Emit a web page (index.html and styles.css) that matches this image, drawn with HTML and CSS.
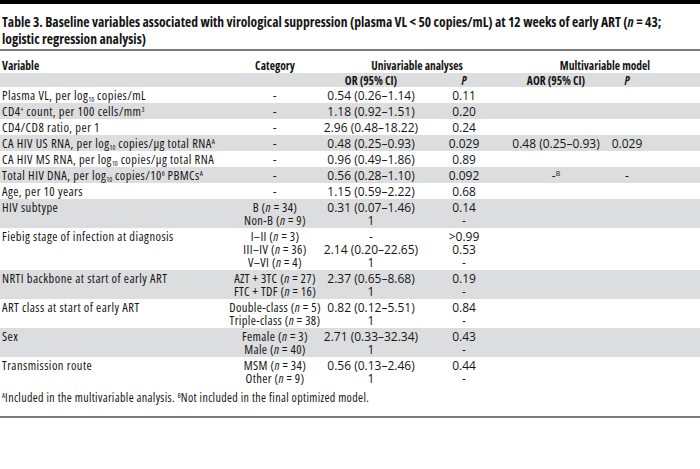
FILE: index.html
```html
<!DOCTYPE html>
<html lang="en">
<head>
<meta charset="utf-8">
<title>Table 3</title>
<link rel="stylesheet" href="styles.css">
</head>
<body>
<div class="topbar"></div>
<h1 class="title">Table 3. Baseline variables associated with virological suppression (plasma VL &lt; 50 copies/mL) at 12 weeks of early ART (<i>n</i> = 43;<br>logistic regression analysis)</h1>
<div class="rule"></div>
<table class="tbl">
  <colgroup>
    <col class="c-var"><col class="c-cat"><col class="c-or"><col class="c-p"><col class="c-aor"><col class="c-p2"><col class="c-fill">
  </colgroup>
  <thead>
    <tr class="h1">
      <th class="left">Variable</th>
      <th>Category</th>
      <th colspan="2" class="span-uni">Univariable analyses</th>
      <th colspan="3" class="span-multi">Multivariable model</th>
    </tr>
    <tr class="h2 shade">
      <th></th><th></th>
      <th>OR (95% CI)</th>
      <th><i>P</i></th>
      <th>AOR (95% CI)</th>
      <th><i>P</i></th>
      <th></th>
    </tr>
  </thead>
  <tbody>
    <tr><td class="var">Plasma VL, per log<sub>10</sub> copies/mL</td><td class="cat">-</td><td>0.54 (0.26–1.14)</td><td>0.11</td><td></td><td></td><td></td></tr>
    <tr class="shade"><td class="var">CD4<sup>+</sup> count, per 100 cells/mm<sup>3</sup></td><td class="cat">-</td><td>1.18 (0.92–1.51)</td><td>0.20</td><td></td><td></td><td></td></tr>
    <tr><td class="var">CD4/CD8 ratio, per 1</td><td class="cat">-</td><td>2.96 (0.48–18.22)</td><td>0.24</td><td></td><td></td><td></td></tr>
    <tr class="shade"><td class="var">CA HIV US RNA, per log<sub>10</sub> copies/μg total RNA<sup>A</sup></td><td class="cat">-</td><td>0.48 (0.25–0.93)</td><td>0.029</td><td>0.48 (0.25–0.93)</td><td>0.029</td><td></td></tr>
    <tr><td class="var">CA HIV MS RNA, per log<sub>10</sub> copies/μg total RNA</td><td class="cat">-</td><td>0.96 (0.49–1.86)</td><td>0.89</td><td></td><td></td><td></td></tr>
    <tr class="shade"><td class="var">Total HIV DNA, per log<sub>10</sub> copies/10<sup>6</sup> PBMCs<sup>A</sup></td><td class="cat">-</td><td>0.56 (0.28–1.10)</td><td>0.092</td><td>-<sup>B</sup></td><td>-</td><td></td></tr>
    <tr><td class="var">Age, per 10 years</td><td class="cat">-</td><td>1.15 (0.59–2.22)</td><td>0.68</td><td></td><td></td><td></td></tr>
    <tr class="shade"><td class="var">HIV subtype</td><td class="cat">B (<i>n</i> = 34)<br>Non-B (<i>n</i> = 9)</td><td>0.31 (0.07–1.46)<br>1</td><td>0.14<br>-</td><td></td><td></td><td></td></tr>
    <tr><td class="var">Fiebig stage of infection at diagnosis</td><td class="cat">I–II (<i>n</i> = 3)<br>III–IV (<i>n</i> = 36)<br>V–VI (<i>n</i> = 4)</td><td>-<br>2.14 (0.20–22.65)<br>1</td><td>&gt;0.99<br>0.53<br>-</td><td></td><td></td><td></td></tr>
    <tr class="shade"><td class="var">NRTI backbone at start of early ART</td><td class="cat">AZT + 3TC (<i>n</i> = 27)<br>FTC + TDF (<i>n</i> = 16)</td><td>2.37 (0.65–8.68)<br>1</td><td>0.19<br>-</td><td></td><td></td><td></td></tr>
    <tr><td class="var">ART class at start of early ART</td><td class="cat">Double-class (<i>n</i> = 5)<br>Triple-class (<i>n</i> = 38)</td><td>0.82 (0.12–5.51)<br>1</td><td>0.84<br>-</td><td></td><td></td><td></td></tr>
    <tr class="shade"><td class="var">Sex</td><td class="cat">Female (<i>n</i> = 3)<br>Male (<i>n</i> = 40)</td><td>2.71 (0.33–32.34)<br>1</td><td>0.43<br>-</td><td></td><td></td><td></td></tr>
    <tr><td class="var">Transmission route</td><td class="cat">MSM (<i>n</i> = 34)<br>Other (<i>n</i> = 9)</td><td>0.56 (0.13–2.46)<br>1</td><td>0.44<br>-</td><td></td><td></td><td></td></tr>
  </tbody>
</table>
<p class="foot"><sup>A</sup>Included in the multivariable analysis. <sup>B</sup>Not included in the final optimized model.</p>
<div class="rule bottom"></div>
</body>
</html>
```
FILE: styles.css
```css
html, body {
  margin: 0;
  padding: 0;
  background: #ffffff;
}
body {
  width: 700px;
  color: #151515;
  font-family: "Open Sans", "DejaVu Sans Condensed", sans-serif;
  font-stretch: 90%;
  font-size: 12px;
}
.topbar {
  height: 4px;
  background: #000;
}
.title {
  margin: 0;
  padding: 9px 2px 0 2px;
  font-size: 13.6px;
  font-stretch: 75%;
  line-height: 17px;
  font-weight: bold;
  height: 36px;
  white-space: nowrap;
}
.title i { font-style: italic; }
.rule {
  height: 2px;
  background: #7a7a7a;
}
.tbl {
  width: 700px;
  border-collapse: collapse;
  table-layout: fixed;
}
.c-var { width: 228px; }
.c-cat { width: 94px; }
.c-or { width: 98px; }
.c-p { width: 88px; }
.c-aor { width: 96px; }
.c-p2 { width: 46px; }
.c-fill { width: 50px; }
.tbl th, .tbl td {
  padding: 2px 0 1px 0;
  line-height: 13px;
  text-align: center;
  vertical-align: top;
  white-space: nowrap;
}
.tbl .left { text-align: left; padding-left: 2px; }
.tbl .var {
  text-align: left;
  padding-left: 2px;
  font-stretch: 75%;
  font-size: 12.5px;
  letter-spacing: 0.45px;
}
.tbl .cat {
  font-stretch: 75%;
  font-size: 12.5px;
  letter-spacing: 0.35px;
}
.tbl th {
  font-weight: bold;
  font-stretch: 75%;
  font-size: 11.5px;
}
.h1 th {
  padding-top: 8px;
  padding-bottom: 1px;
}
.h2 th {
  padding-top: 1px;
  padding-bottom: 0;
}
.span-uni { padding-left: 4px !important; }
.span-multi { padding-left: 2px !important; }
.shade { background: #dcdddf; }
sub, sup {
  font-size: 7px;
  line-height: 0;
  letter-spacing: 0;
  position: relative;
  vertical-align: baseline;
}
sub { top: 2px; }
sup { top: -4px; }
.foot {
  margin: 0;
  padding: 5px 2px 12px 2px;
  line-height: 13px;
  font-stretch: 75%;
  letter-spacing: 0.35px;
}
```
